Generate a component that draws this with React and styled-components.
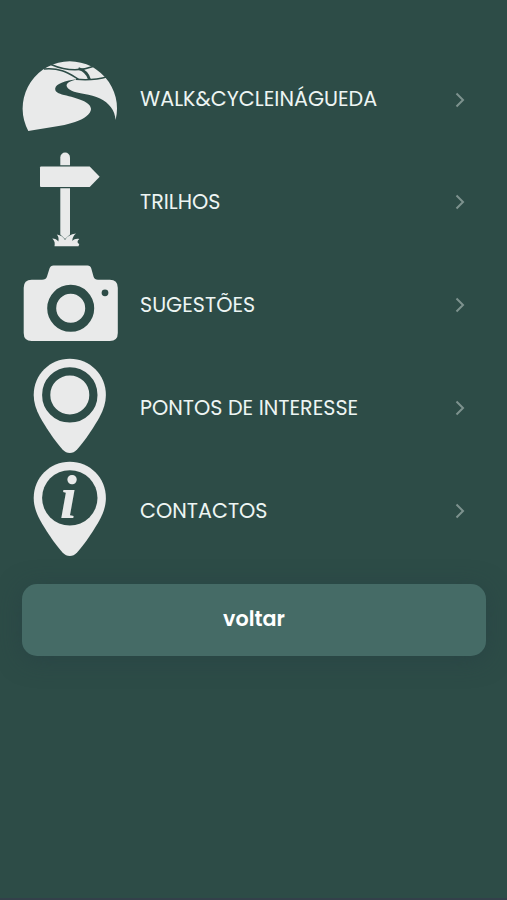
import React from 'react'
import styled, { createGlobalStyle } from 'styled-components';

const GlobalStyle = createGlobalStyle`
  body {
    margin:0;
    background-color:#2d4c47;
  }
`
const Container = styled.div`
  box-sizing:border-box;
  height:900px;
  padding:49px 21px 0 22px;
  display:flex;
  flex-direction:column;
  background-color:#2d4c47;
  border-bottom:2px solid #33404a;
  font-family: Poppins, Lato, sans-serif;
  overflow:hidden;
`
const Menu = styled.nav`
  display:flex;
  flex-direction:column;
  gap:6.9px;
`
const Item = styled.a`
  display:flex;
  align-items:center;
  height:96px;
  padding-right:20px;
  cursor:pointer;
`
const Icon = styled.svg`
  width:96px;
  height:96px;
  flex-shrink:0;
  overflow:visible;
  fill:#e9eaea;
`
const Label = styled.span`
  flex:1;
  margin-left:22px;
  padding-top:4.6px;
  font-size:20.7px;
  line-height:30px;
  white-space:nowrap;
  color:#edf5f3;
`
const Arrow = styled.svg`
  width:12px;
  height:18px;
  margin-top:5px;
  fill:none;
  stroke:#7d928e;
  stroke-width:2;
`
const Button = styled.button`
  height:72px;
  margin-top:27px;
  padding-bottom:3px;
  border:none;
  border-radius:15px;
  background-color:#456b66;
  color:white;
  font-family:inherit;
  font-size:20.7px;
  font-weight:600;
  box-shadow:0 4px 24px rgba(38, 62, 68, 0.5);
  cursor:pointer;
`

const dark = '#2d4c47';
const pin = 'M47.8 .8C27.8 .8 11.7 16.8 11.7 36.9C11.7 44.5 14 51.5 18 59C22 66.5 33 83.5 40.5 91.5C45 96.2 50.6 96.2 55.1 91.5C62.6 83.5 73.6 66.5 77.6 59C81.6 51.5 83.9 44.5 83.9 36.9C83.9 16.8 67.8 .8 47.8 .8Z';

const RoadIcon = () => (
  <Icon viewBox="0 0 96 96">
    <path d="M6.3 82A47.2 47.2 0 1 1 93.6 71C93 61 87 54 78 49.5C69 45 55 44.5 49.7 41.7C42 38 42 33 56.3 30C42 31.5 34 35 33.2 39.5C33 43 36 44.5 42 46C55 49 69 53 69 60C69 65 62 70 53 73C40 77.5 22 79 6.3 82Z" />
    <g fill="none" stroke={dark} strokeWidth="1.5">
      <path d="M22 20C38 18.5 46 24 56.3 30" />
      <path d="M29 15.5C44 22 58 22.5 71 17.5" />
      <path d="M54 30.3C66 31.5 76 30.5 86 27.5" />
      <path d="M56.5 19.5C63 21.5 66 25 67.5 30.5" strokeWidth="2.8" />
    </g>
  </Icon>
)
const SignIcon = () => (
  <Icon viewBox="0 0 96 96">
    <path d="M38.3 13.2V5.4A4.85 4.85 0 0 1 48 5.4V13.2Z" />
    <path d="M19 14.6H67.7L77.7 24.7L67.7 35H19Q18 35 18 34V15.6Q18 14.6 19 14.6Z" />
    <path d="M38.3 36.2H48V82.5L43 87L38.3 82.5Z" />
    <path d="M32.5 94.3C33 91.5 33 89 30.3 86.5C33 86.5 35 87.5 36.3 89.5C37 87 36.5 84.5 34.8 82.5C38.5 83 41.5 85 43 88C45 84.5 48.5 82.2 54 81.5C51.5 83.5 50.3 86 50.3 89C52 87 54.5 86.5 57.3 87C55.3 88.7 54.8 90.7 57.3 92L56.5 94.3Z" />
  </Icon>
)
const CameraIcon = () => (
  <Icon viewBox="0 0 96 96">
    <path d="M9.7 24.8H20Q24 24.8 25 21.5L27.5 13.5Q28.5 10.5 31.5 10.5H65.5Q68.5 10.5 69.3 13.5L71.5 21.5Q72.5 24.8 76 24.8H87.8Q95.8 24.8 95.8 32.8V78Q95.8 86 87.8 86H9.7Q1.7 86 1.7 78V32.8Q1.7 24.8 9.7 24.8Z" />
    <circle cx="48.7" cy="53.3" r="19" fill="none" stroke={dark} strokeWidth="9" />
    <circle cx="83" cy="37.8" r="3.4" fill={dark} />
  </Icon>
)
const PinIcon = () => (
  <Icon viewBox="0 0 96 96">
    <path d={pin} />
    <circle cx="47.8" cy="36.9" r="23.6" fill="none" stroke={dark} strokeWidth="8.2" />
  </Icon>
)
const InfoIcon = () => (
  <Icon viewBox="0 0 96 96">
    <path d={pin} />
    <circle cx="47.8" cy="36.9" r="27.7" fill={dark} />
    <text x="37.8" y="56.8" fontFamily="Liberation Serif, serif" fontSize="62" fontStyle="italic" fontWeight="700">i</text>
  </Icon>
)

const items = [
  { name: 'WALK&CYCLEINÁGUEDA', icon: RoadIcon },
  { name: 'TRILHOS', icon: SignIcon },
  { name: 'SUGESTÕES', icon: CameraIcon },
  { name: 'PONTOS DE INTERESSE', icon: PinIcon },
  { name: 'CONTACTOS', icon: InfoIcon },
]

const App = () => {
  return (
    <Container>
      <GlobalStyle />
      <Menu>
        {items.map(({ name, icon: ItemIcon }) => (
          <Item key={name}>
            <ItemIcon />
            <Label>{name}</Label>
            <Arrow viewBox="0 0 12 18">
              <path d="M2.5 2.5L9 9L2.5 15.5" />
            </Arrow>
          </Item>
        ))}
      </Menu>
      <Button>voltar</Button>
    </Container>
  )
}

export default App
